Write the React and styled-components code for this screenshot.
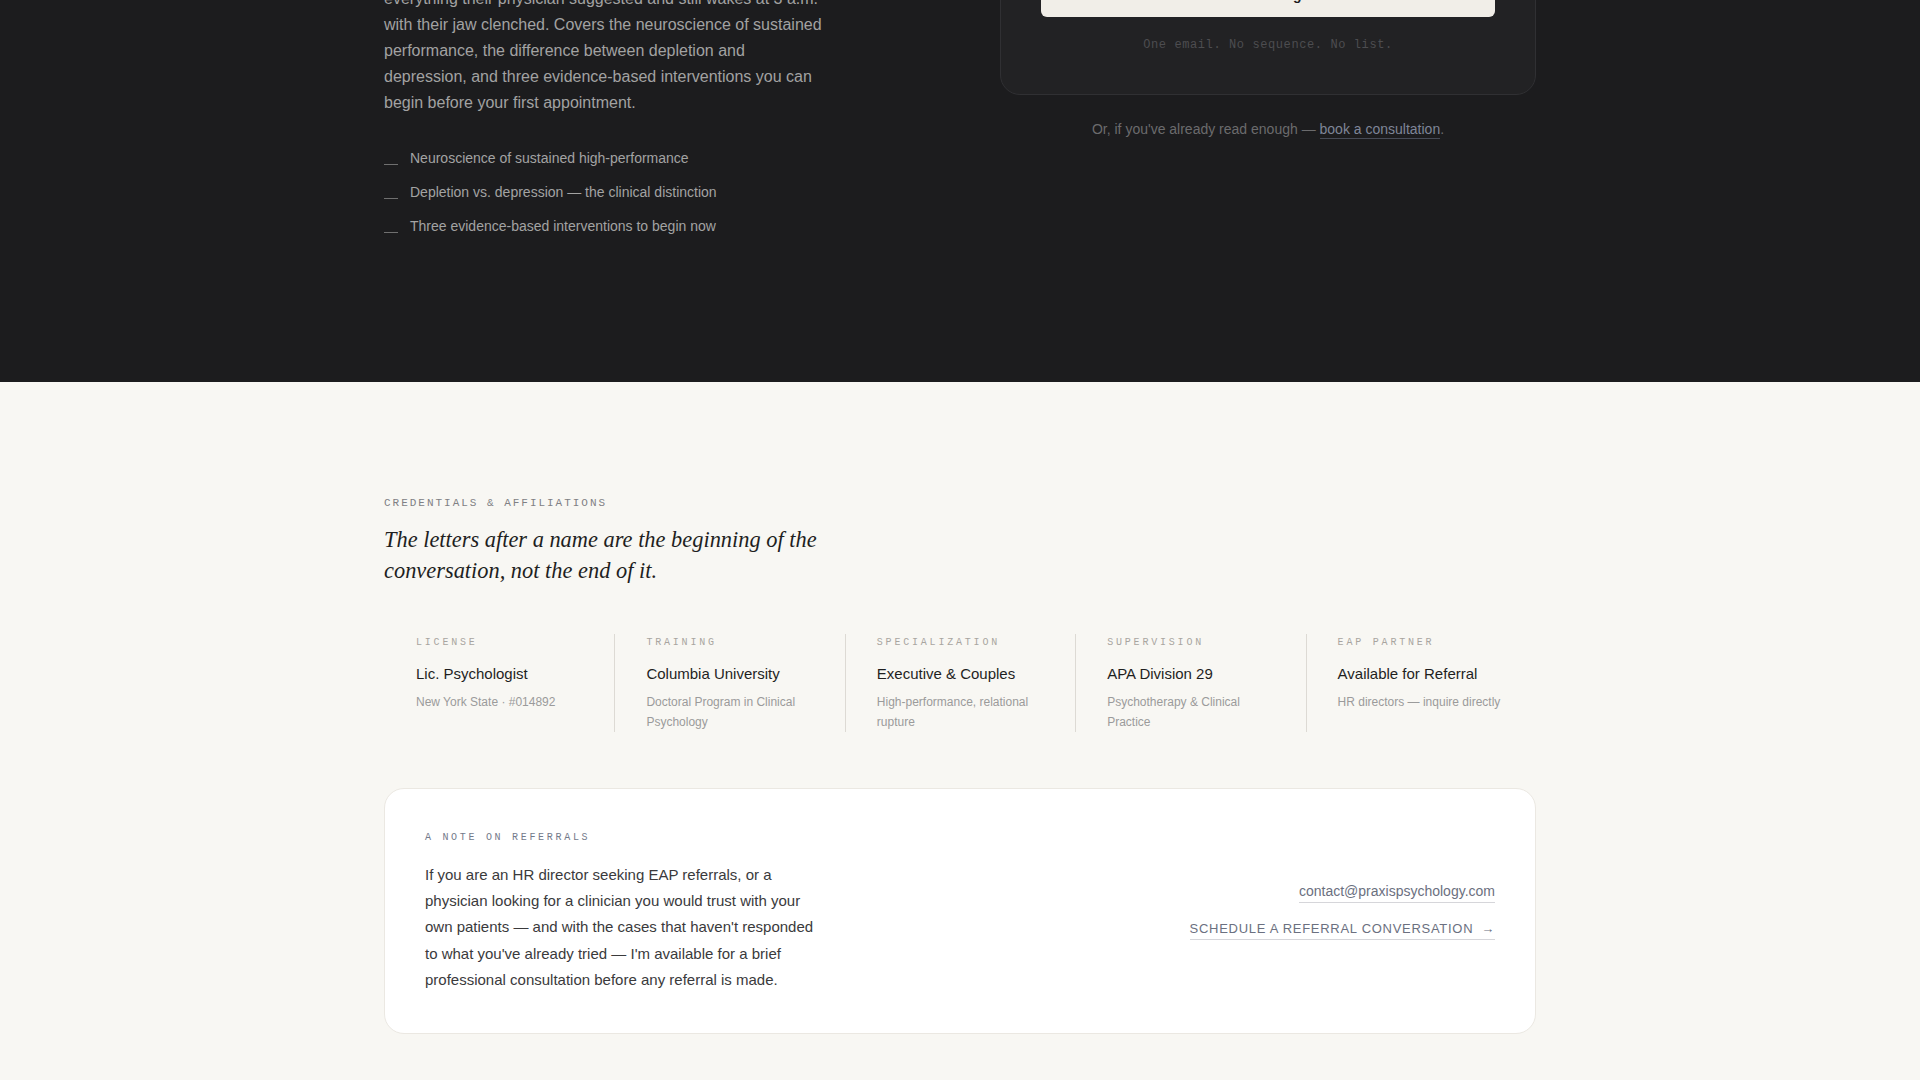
import React from "react";
import styled, { createGlobalStyle } from "styled-components";

const GlobalStyle = createGlobalStyle`
  html, body { margin: 0; padding: 0; }
  body {
    background: #f8f7f3;
    font-family: "Liberation Sans", Arial, sans-serif;
    -webkit-font-smoothing: antialiased;
  }
  * { box-sizing: border-box; }
`;

const Page = styled.div`
  margin-top: -320px;
`;

const DarkSection = styled.section`
  background: #1c1c1e;
  padding: 120px 0 146px;
`;

const LightSection = styled.section`
  background: #f8f7f3;
  padding: 114px 0 120px;
`;

const Container = styled.div`
  width: 1152px;
  margin: 0 auto;
`;

const DarkGrid = styled.div`
  display: grid;
  grid-template-columns: 1fr 536px;
  column-gap: 80px;
  align-items: start;
`;

const Column = styled.div`
  display: flex;
  flex-direction: column;
`;

const MonoLabel = styled.div`
  font-family: "Liberation Mono", "DejaVu Sans Mono", monospace;
  font-size: ${(p) => p.$size || 10}px;
  line-height: ${(p) => p.$lh || 14}px;
  letter-spacing: ${(p) => p.$ls || "0.28em"};
  text-transform: uppercase;
  color: ${(p) => p.$color || "#8a8a8a"};
`;

const GuideTitle = styled.h2`
  margin: 24px 0 24px;
  font-family: "Liberation Serif", "Times New Roman", serif;
  font-weight: 400;
  font-size: 40px;
  line-height: 48px;
  color: #f1eee8;
`;

const Lead = styled.p`
  margin: 0;
  max-width: 440px;
  font-size: 16px;
  line-height: 26px;
  color: #a2a2a2;
`;

const BulletList = styled.ul`
  list-style: none;
  margin: 32px 0 0;
  padding: 0;
  display: flex;
  flex-direction: column;
  gap: 14px;
`;

const Bullet = styled.li`
  display: flex;
  align-items: baseline;
  gap: 12px;
  font-size: 14px;
  line-height: 20px;
  color: #a3a3a3;
  &::before {
    content: "";
    flex: 0 0 14px;
    height: 1px;
    background: #6f6f6f;
    transform: translateY(2px);
  }
`;

const FormCard = styled.div`
  background: #222224;
  border: 1px solid #303033;
  border-radius: 20px;
  padding: 40px 40px 41px;
  display: flex;
  flex-direction: column;
`;

const FormTitle = styled.h3`
  margin: 16px 0 16px;
  font-family: "Liberation Serif", "Times New Roman", serif;
  font-weight: 400;
  font-size: 22px;
  line-height: 28px;
  color: #f1eee8;
`;

const EmailInput = styled.input`
  height: 44px;
  margin: 0 0 12px;
  padding: 0 16px;
  border: 1px solid #3a3a3d;
  border-radius: 6px;
  background: #1a1a1c;
  color: #ddd;
  font-family: "Liberation Sans", Arial, sans-serif;
  font-size: 14px;
`;

const SubmitButton = styled.button`
  height: 44px;
  border: 0;
  border-radius: 6px;
  background: #f1eee8;
  color: #1c1c1e;
  font-family: "Liberation Sans", Arial, sans-serif;
  font-weight: 700;
  font-size: 14px;
  cursor: pointer;
`;

const FormNote = styled.div`
  margin-top: 20px;
  text-align: center;
  font-family: "Liberation Mono", monospace;
  font-size: 12px;
  line-height: 16px;
  letter-spacing: 0.05em;
  color: #4d4d50;
`;

const AltLine = styled.p`
  margin: 24px 0 0;
  text-align: center;
  font-size: 14px;
  line-height: 20px;
  color: #6b6b6d;
`;

const AltLink = styled.a`
  color: #7f8698;
  text-decoration: none;
  border-bottom: 1px solid #464a55;
  padding-bottom: 1px;
`;

const Statement = styled.h2`
  margin: 15px 0 0;
  max-width: 480px;
  font-family: "Liberation Serif", "Times New Roman", serif;
  font-style: italic;
  font-weight: 400;
  font-size: 22.4px;
  line-height: 30.5px;
  color: #1f1f1f;
`;

const CredGrid = styled.div`
  margin-top: 48px;
  display: grid;
  grid-template-columns: repeat(5, 1fr);
`;

const Cred = styled.div`
  padding: 0 22px 0 31px;
  border-left: 1px solid ${(p) => (p.$first ? "transparent" : "#dddad4")};
  display: flex;
  flex-direction: column;
`;

const CredTitle = styled.div`
  margin-top: 12px;
  font-size: 15px;
  line-height: 20px;
  color: #1f1f1f;
`;

const CredSub = styled.div`
  margin-top: 8px;
  font-size: 12px;
  line-height: 20px;
  color: #9b9b9b;
`;

const ReferralCard = styled.div`
  margin-top: 56px;
  background: #ffffff;
  border: 1px solid #ebe8e2;
  border-radius: 20px;
  padding: 40px;
  display: grid;
  grid-template-columns: 1fr auto;
  align-items: center;
`;

const ReferralText = styled.p`
  margin: 15px 0 0;
  max-width: 400px;
  font-size: 15px;
  line-height: 26.2px;
  color: #3a3a3c;
`;

const ContactStack = styled.div`
  display: flex;
  flex-direction: column;
  align-items: flex-end;
  gap: 17px;
`;

const ContactLink = styled.a`
  color: #6b7080;
  text-decoration: none;
  border-bottom: 1px solid #d6d6da;
  font-size: ${(p) => (p.$caps ? 13 : 14)}px;
  line-height: 18px;
  padding-bottom: ${(p) => (p.$caps ? 1 : 2)}px;
  letter-spacing: ${(p) => (p.$caps ? "0.055em" : "0")};
  text-transform: ${(p) => (p.$caps ? "uppercase" : "none")};
`;

const Arrow = styled.span`
  margin-left: 8px;
`;

const credentials = [
  { label: "License", title: "Lic. Psychologist", sub: "New York State · #014892" },
  { label: "Training", title: "Columbia University", sub: "Doctoral Program in Clinical Psychology" },
  { label: "Specialization", title: "Executive & Couples", sub: "High-performance, relational rupture" },
  { label: "Supervision", title: "APA Division 29", sub: "Psychotherapy & Clinical Practice" },
  { label: "EAP Partner", title: "Available for Referral", sub: "HR directors — inquire directly" },
];

const bullets = [
  "Neuroscience of sustained high-performance",
  "Depletion vs. depression — the clinical distinction",
  "Three evidence-based interventions to begin now",
];

export default function App() {
  return (
    <Page>
      <GlobalStyle />
      <DarkSection>
        <Container>
          <DarkGrid>
            <Column>
              <MonoLabel $size={11} $lh={16} $ls="0.18em" $color="#7a7a7c">
                Free clinical guide
              </MonoLabel>
              <GuideTitle>
                When rest stops working:
                <br />
                a guide for high performers
              </GuideTitle>
              <Lead>
                A short guide for the professional who has tried
                <br />
                everything their physician suggested and still wakes at 3 a.m.
                with their jaw clenched. Covers the neuroscience of sustained
                performance, the difference between depletion and depression,
                and three evidence-based interventions you can begin before your
                first appointment.
              </Lead>
              <BulletList>
                {bullets.map((b) => (
                  <Bullet key={b}>{b}</Bullet>
                ))}
              </BulletList>
            </Column>
            <Column>
              <FormCard>
                <MonoLabel $size={11} $lh={16} $ls="0.18em" $color="#7a7a7c">
                  Receive the guide
                </MonoLabel>
                <FormTitle>Sent to your inbox, once.</FormTitle>
                <EmailInput type="email" placeholder="Your email address" />
                <SubmitButton type="button">Send me the guide</SubmitButton>
                <FormNote>One email. No sequence. No list.</FormNote>
              </FormCard>
              <AltLine>
                Or, if you've already read enough —{" "}
                <AltLink href="#">book a consultation</AltLink>.
              </AltLine>
            </Column>
          </DarkGrid>
        </Container>
      </DarkSection>

      <LightSection>
        <Container>
          <MonoLabel $size={11} $lh={14} $ls="0.18em" $color="#808084">
            Credentials &amp; Affiliations
          </MonoLabel>
          <Statement>
            The letters after a name are the beginning of the conversation, not
            the end of it.
          </Statement>
          <CredGrid>
            {credentials.map((c, i) => (
              <Cred key={c.label} $first={i === 0}>
                <MonoLabel $lh={18} $color="#a8a5a0">
                  {c.label}
                </MonoLabel>
                <CredTitle>{c.title}</CredTitle>
                <CredSub>{c.sub}</CredSub>
              </Cred>
            ))}
          </CredGrid>
          <ReferralCard>
            <div>
              <MonoLabel $lh={18} $ls="0.27em" $color="#737a8a">
                A note on referrals
              </MonoLabel>
              <ReferralText>
                If you are an HR director seeking EAP referrals, or a physician
                looking for a clinician you would trust with your own patients —
                and with the cases that haven't responded to what you've already
                tried — I'm available for a brief professional consultation
                before any referral is made.
              </ReferralText>
            </div>
            <ContactStack>
              <ContactLink href="#">contact@praxispsychology.com</ContactLink>
              <ContactLink href="#" $caps>
                Schedule a referral conversation<Arrow>→</Arrow>
              </ContactLink>
            </ContactStack>
          </ReferralCard>
        </Container>
      </LightSection>
    </Page>
  );
}
